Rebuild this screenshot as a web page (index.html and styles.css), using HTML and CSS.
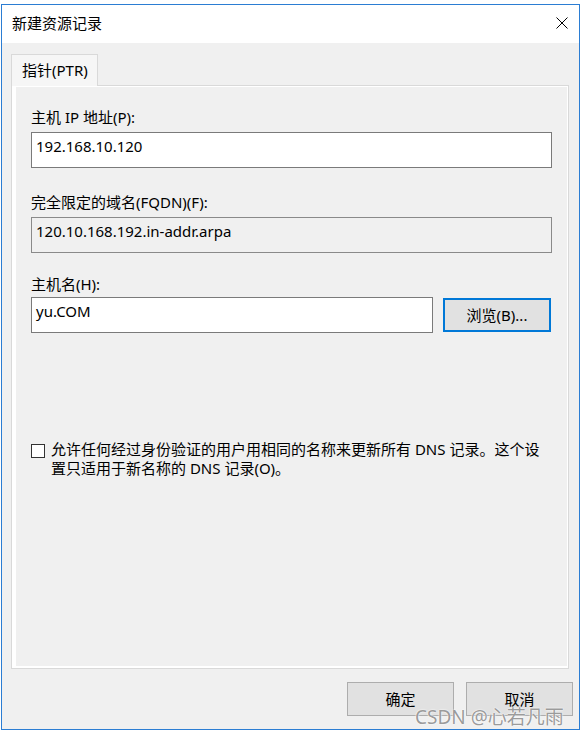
FILE: index.html
```html
<!DOCTYPE html>
<html lang="zh-CN">
<head>
<meta charset="utf-8">
<title>新建资源记录</title>
<link rel="stylesheet" href="styles.css">
</head>
<body>
<div class="window">
  <div class="titlebar">
    <span class="title">新建资源记录</span>
    <svg class="close" width="12" height="12" viewBox="0 0 12 12" aria-hidden="true">
      <path d="M0.5 0.5 L11.5 11.5 M11.5 0.5 L0.5 11.5" stroke="#000" stroke-width="1" fill="none"/>
    </svg>
  </div>
  <div class="client">
    <div class="tabs"><div class="tab">指针(PTR)</div></div>
    <div class="panel">
      <div class="page">
        <div class="field">
          <div class="label">主机 IP 地址(P):</div>
          <div class="edit">192.168.10.120</div>
        </div>
        <div class="field field-fqdn">
          <div class="label">完全限定的域名(FQDN)(F):</div>
          <div class="edit edit-readonly">120.10.168.192.in-addr.arpa</div>
        </div>
        <div class="field field-host">
          <div class="label">主机名(H):</div>
          <div class="host-row">
            <div class="edit edit-host">yu.COM</div>
            <div class="btn btn-focus">浏览(B)...</div>
          </div>
        </div>
        <div class="check">
          <span class="box"></span>
          <span class="check-text">允许任何经过身份验证的用户用相同的名称来更新所有 DNS 记录。这个设<br>置只适用于新名称的 DNS 记录(O)。</span>
        </div>
      </div>
    </div>
    <div class="buttons">
      <div class="btn">确定</div>
      <div class="btn">取消</div>
    </div>
  </div>
  <div class="watermark">CSDN @心若凡雨</div>
</div>
</body>
</html>
```
FILE: styles.css
```css
* { box-sizing: border-box; }
html, body { margin: 0; padding: 0; background: #ffffff; }
body {
  font-family: "Noto Sans", "Noto Sans CJK SC", sans-serif;
  font-size: 15px;
  color: #000;
}
.window {
  position: relative;
  margin: 4px 0 0 1px;
  width: 579px;
  height: 726px;
  border: 1px solid #2b7dd3;
  display: flex;
  flex-direction: column;
  background: #f0f0f0;
}
.titlebar {
  height: 38px;
  background: #ffffff;
  display: flex;
  align-items: flex-start;
  justify-content: space-between;
  flex: none;
}
.title {
  padding-left: 10px;
  line-height: 36px;
  font-size: 15px;
}
.close {
  margin-top: 12px;
  margin-right: 11px;
}
.client {
  flex: 1;
  background: #f0f0f0;
  padding: 11px 0 0 9px;
  display: flex;
  flex-direction: column;
}
.tabs { display: flex; }
.tab {
  position: relative;
  z-index: 1;
  height: 32px;
  margin-bottom: -1px;
  padding: 0 9px 0 10px;
  line-height: 30px;
  background: #f6f6f6;
  border: 1px solid #d9d9d9;
  border-bottom: none;
}
.panel {
  width: 558px;
  height: 584px;
  border: 1px solid #d9d9d9;
  background: #ffffff;
  padding: 1px 1px 2px 4px;
}
.page {
  height: 100%;
  background: #f0f0f0;
  padding: 20px 15px 0 15px;
  display: flex;
  flex-direction: column;
}
.field { display: flex; flex-direction: column; gap: 5px; }
.field-fqdn { margin-top: 24px; }
.field-host { margin-top: 21px; gap: 3px; }
.label { line-height: 20px; }
.edit {
  width: 521px;
  height: 36px;
  border: 1px solid #7a7a7a;
  background: #ffffff;
  padding: 3px 4px;
  line-height: 20px;
  white-space: nowrap;
}
.edit-readonly { background: #f0f0f0; border-color: #8a8a8a; }
.host-row { display: flex; align-items: center; gap: 10px; }
.edit-host { width: 402px; }
.btn {
  width: 107px;
  height: 34px;
  border: 1px solid #adadad;
  background: #e1e1e1;
  display: flex;
  align-items: center;
  justify-content: center;
  line-height: 20px;
}
.btn-focus { border: 2px solid #0078d7; width: 108px; }
.check {
  margin-top: 107px;
  display: flex;
  align-items: flex-start;
  gap: 6px;
}
.box {
  flex: none;
  width: 14px;
  height: 14px;
  margin-top: 4px;
  border: 1px solid #333333;
  background: #ffffff;
}
.check-text { line-height: 19px; white-space: nowrap; }
.buttons {
  margin-top: 13px;
  padding-right: 6px;
  display: flex;
  justify-content: flex-end;
  gap: 12px;
}
.watermark {
  position: absolute;
  left: 413px;
  top: 701px;
  font-size: 19px;
  line-height: 22px;
  color: rgba(128, 128, 128, 0.8);
  text-shadow: 0 0 2px #ffffff, 0 0 1px #ffffff;
  white-space: nowrap;
}
```
